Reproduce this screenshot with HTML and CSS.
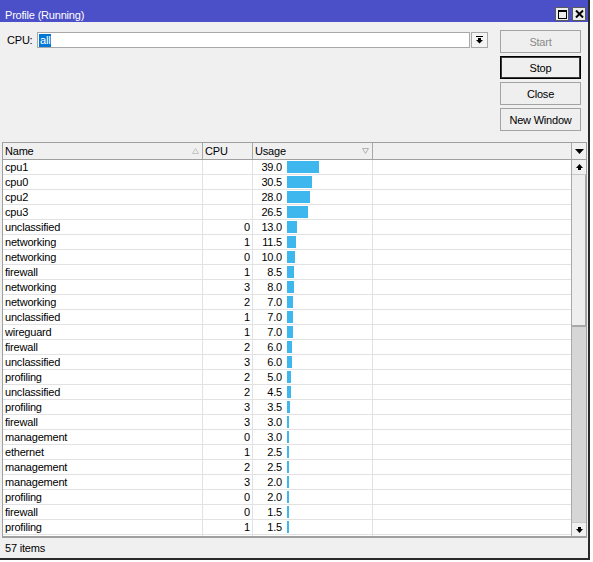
FILE: index.html
```html
<!DOCTYPE html>
<html>
<head>
<meta charset="utf-8">
<link rel="stylesheet" href="styles.css">
</head>
<body>
<div class="window">
  <div class="titlebar">
    <span class="title">Profile (Running)</span>
    <div class="tb-btns">
      <span class="tb-btn"><svg width="9" height="9" viewBox="0 0 9 9"><rect x="0.5" y="0.5" width="8" height="8" fill="none" stroke="#000"/><rect x="0" y="0" width="9" height="2" fill="#000"/></svg></span>
      <span class="tb-btn"><svg width="9" height="8" viewBox="0 0 9 8"><path d="M1 0.5 L8 7.5 M8 0.5 L1 7.5" stroke="#000" stroke-width="2"/></svg></span>
    </div>
  </div>
  <div class="top">
    <div class="cpu-row">
      <span class="cpu-label">CPU:</span>
      <div class="combo"><span class="sel">all</span></div>
      <span class="drop"><svg width="7" height="8" viewBox="0 0 7 8"><rect x="0" y="0" width="7" height="1" fill="#000"/><rect x="2" y="2" width="3" height="2" fill="#000"/><polygon points="0,4 7,4 3.5,7.5" fill="#000"/></svg></span>
    </div>
    <div class="btns">
      <div class="btn disabled">Start</div>
      <div class="btn default">Stop</div>
      <div class="btn">Close</div>
      <div class="btn">New Window</div>
    </div>
  </div>
  <div class="grid">
    <div class="ghead">
      <div class="hc c-name">Name<svg class="sort" width="7" height="6" viewBox="0 0 7 6"><polygon points="3.5,0.5 6.5,5.5 0.5,5.5" fill="none" stroke="#c4c4c4"/></svg></div>
      <div class="hc c-cpu">CPU</div>
      <div class="hc c-usage">Usage<svg class="sort" width="7" height="6" viewBox="0 0 7 6"><polygon points="0.5,0.5 6.5,0.5 3.5,5.5" fill="none" stroke="#b0b0b0"/></svg></div>
      <div class="hc c-empty"></div>
      <div class="hc c-menu"><svg width="9" height="5" viewBox="0 0 9 5"><polygon points="0,0 9,0 4.5,5" fill="#000"/></svg></div>
    </div>
    <div class="gbody">
      <div class="rows">
        <div class="row"><div class="c c-name">cpu1</div><div class="c c-cpu"></div><div class="c c-usage"><span class="num">39.0</span><span class="bar" style="width:32px"></span></div><div class="c c-empty"></div></div>
        <div class="row"><div class="c c-name">cpu0</div><div class="c c-cpu"></div><div class="c c-usage"><span class="num">30.5</span><span class="bar" style="width:25px"></span></div><div class="c c-empty"></div></div>
        <div class="row"><div class="c c-name">cpu2</div><div class="c c-cpu"></div><div class="c c-usage"><span class="num">28.0</span><span class="bar" style="width:23px"></span></div><div class="c c-empty"></div></div>
        <div class="row"><div class="c c-name">cpu3</div><div class="c c-cpu"></div><div class="c c-usage"><span class="num">26.5</span><span class="bar" style="width:21px"></span></div><div class="c c-empty"></div></div>
        <div class="row"><div class="c c-name">unclassified</div><div class="c c-cpu">0</div><div class="c c-usage"><span class="num">13.0</span><span class="bar" style="width:10px"></span></div><div class="c c-empty"></div></div>
        <div class="row"><div class="c c-name">networking</div><div class="c c-cpu">1</div><div class="c c-usage"><span class="num">11.5</span><span class="bar" style="width:9px"></span></div><div class="c c-empty"></div></div>
        <div class="row"><div class="c c-name">networking</div><div class="c c-cpu">0</div><div class="c c-usage"><span class="num">10.0</span><span class="bar" style="width:8px"></span></div><div class="c c-empty"></div></div>
        <div class="row"><div class="c c-name">firewall</div><div class="c c-cpu">1</div><div class="c c-usage"><span class="num">8.5</span><span class="bar" style="width:7px"></span></div><div class="c c-empty"></div></div>
        <div class="row"><div class="c c-name">networking</div><div class="c c-cpu">3</div><div class="c c-usage"><span class="num">8.0</span><span class="bar" style="width:7px"></span></div><div class="c c-empty"></div></div>
        <div class="row"><div class="c c-name">networking</div><div class="c c-cpu">2</div><div class="c c-usage"><span class="num">7.0</span><span class="bar" style="width:6px"></span></div><div class="c c-empty"></div></div>
        <div class="row"><div class="c c-name">unclassified</div><div class="c c-cpu">1</div><div class="c c-usage"><span class="num">7.0</span><span class="bar" style="width:6px"></span></div><div class="c c-empty"></div></div>
        <div class="row"><div class="c c-name">wireguard</div><div class="c c-cpu">1</div><div class="c c-usage"><span class="num">7.0</span><span class="bar" style="width:6px"></span></div><div class="c c-empty"></div></div>
        <div class="row"><div class="c c-name">firewall</div><div class="c c-cpu">2</div><div class="c c-usage"><span class="num">6.0</span><span class="bar" style="width:5px"></span></div><div class="c c-empty"></div></div>
        <div class="row"><div class="c c-name">unclassified</div><div class="c c-cpu">3</div><div class="c c-usage"><span class="num">6.0</span><span class="bar" style="width:5px"></span></div><div class="c c-empty"></div></div>
        <div class="row"><div class="c c-name">profiling</div><div class="c c-cpu">2</div><div class="c c-usage"><span class="num">5.0</span><span class="bar" style="width:4px"></span></div><div class="c c-empty"></div></div>
        <div class="row"><div class="c c-name">unclassified</div><div class="c c-cpu">2</div><div class="c c-usage"><span class="num">4.5</span><span class="bar" style="width:4px"></span></div><div class="c c-empty"></div></div>
        <div class="row"><div class="c c-name">profiling</div><div class="c c-cpu">3</div><div class="c c-usage"><span class="num">3.5</span><span class="bar" style="width:3px"></span></div><div class="c c-empty"></div></div>
        <div class="row"><div class="c c-name">firewall</div><div class="c c-cpu">3</div><div class="c c-usage"><span class="num">3.0</span><span class="bar" style="width:2px"></span></div><div class="c c-empty"></div></div>
        <div class="row"><div class="c c-name">management</div><div class="c c-cpu">0</div><div class="c c-usage"><span class="num">3.0</span><span class="bar" style="width:2px"></span></div><div class="c c-empty"></div></div>
        <div class="row"><div class="c c-name">ethernet</div><div class="c c-cpu">1</div><div class="c c-usage"><span class="num">2.5</span><span class="bar" style="width:2px"></span></div><div class="c c-empty"></div></div>
        <div class="row"><div class="c c-name">management</div><div class="c c-cpu">2</div><div class="c c-usage"><span class="num">2.5</span><span class="bar" style="width:2px"></span></div><div class="c c-empty"></div></div>
        <div class="row"><div class="c c-name">management</div><div class="c c-cpu">3</div><div class="c c-usage"><span class="num">2.0</span><span class="bar" style="width:2px"></span></div><div class="c c-empty"></div></div>
        <div class="row"><div class="c c-name">profiling</div><div class="c c-cpu">0</div><div class="c c-usage"><span class="num">2.0</span><span class="bar" style="width:2px"></span></div><div class="c c-empty"></div></div>
        <div class="row"><div class="c c-name">firewall</div><div class="c c-cpu">0</div><div class="c c-usage"><span class="num">1.5</span><span class="bar" style="width:2px"></span></div><div class="c c-empty"></div></div>
        <div class="row"><div class="c c-name">profiling</div><div class="c c-cpu">1</div><div class="c c-usage"><span class="num">1.5</span><span class="bar" style="width:2px"></span></div><div class="c c-empty"></div></div>
        <div class="row"><div class="c c-name"></div><div class="c c-cpu"></div><div class="c c-usage"><span class="num"></span><span class="bar" style="width:2px"></span></div><div class="c c-empty"></div></div>
      </div>
      <div class="vscroll">
        <div class="sb-btn"><svg width="7" height="7" viewBox="0 0 7 7"><polygon points="3.5,0 7,4 0,4" fill="#000"/><rect x="2" y="4" width="3" height="2" fill="#000"/></svg></div>
        <div class="sb-thumb"></div>
        <div class="sb-track"></div>
        <div class="sb-btn sb-down"><svg width="7" height="7" viewBox="0 0 7 7"><rect x="2" y="1" width="3" height="2" fill="#000"/><polygon points="0,3 7,3 3.5,7" fill="#000"/></svg></div>
      </div>
    </div>
  </div>
  <div class="status">57 items</div>
</div>
</body>
</html>
```

FILE: styles.css
```css
html, body {
  margin: 0;
  padding: 0;
  background: #ffffff;
}

body {
  width: 593px;
  height: 562px;
  overflow: hidden;
  font-family: "Liberation Sans", Arial, sans-serif;
  font-size: 11px;
  letter-spacing: -0.2px;
  color: #000;
}

.window {
  width: 588px;
  height: 558px;
  background: #f0f0f0;
  border-right: 2px solid #2a2a2a;
  border-bottom: 2px solid #2a2a2a;
  display: flex;
  flex-direction: column;
}

.titlebar {
  height: 22px;
  flex: none;
  background: #4b4fc8;
  color: #fff;
  display: flex;
  align-items: center;
  padding-left: 5px;
  box-sizing: border-box;
}

.title {
  font-size: 11px;
  margin-top: 7px;
}

.tb-btns {
  margin-left: auto;
  margin-right: 2px;
  margin-top: 6px;
  display: flex;
  gap: 3px;
}

.tb-btn {
  width: 14px;
  height: 14px;
  box-sizing: border-box;
  background: #ececec;
  border: 1px solid #5a5a5a;
  display: flex;
  align-items: center;
  justify-content: center;
}

.top {
  height: 120px;
  flex: none;
  display: flex;
  align-items: flex-start;
}

.cpu-row {
  margin-top: 10px;
  margin-left: 7px;
  height: 16px;
  display: flex;
  align-items: center;
}

.cpu-label {
  width: 30px;
  line-height: 16px;
}

.combo {
  width: 433px;
  height: 16px;
  box-sizing: border-box;
  border: 1px solid #a8a8a8;
  background: #fff;
  display: flex;
  align-items: center;
  padding-left: 1px;
}

.sel {
  background: #0078d7;
  color: #fff;
  line-height: 13px;
  padding: 0 1px;
}

.drop {
  width: 17px;
  height: 16px;
  box-sizing: border-box;
  margin-left: 1px;
  border: 1px solid #a8a8a8;
  background: #f4f4f4;
  display: flex;
  align-items: center;
  justify-content: center;
}

.btns {
  margin-top: 8px;
  margin-left: 12px;
  display: flex;
  flex-direction: column;
  gap: 3px;
}

.btn {
  width: 81px;
  height: 23px;
  box-sizing: border-box;
  border: 1px solid #a3a3a3;
  background: #efefef;
  display: flex;
  align-items: center;
  justify-content: center;
  font-size: 11px;
}

.btn.disabled {
  color: #8a8a8a;
}

.btn.default {
  border: 1px solid #000;
  box-shadow: inset 0 0 0 1px #3a3a3a;
}

.grid {
  margin-left: 2px;
  width: 585px;
  height: 396px;
  flex: none;
  box-sizing: border-box;
  border: 1px solid #a0a0a0;
  border-bottom: 2px solid #a0a0a0;
  background: #fff;
  display: flex;
  flex-direction: column;
}

.ghead {
  height: 17px;
  flex: none;
  box-sizing: border-box;
  border-bottom: 1px solid #a0a0a0;
  background: #f0f0f0;
  display: flex;
}

.hc {
  position: relative;
  box-sizing: border-box;
  border-right: 1px solid #a8a8a8;
  line-height: 16px;
  padding-left: 2px;
}

.hc.c-menu {
  width: 14px;
  border-right: none;
  padding: 0;
  display: flex;
  align-items: center;
  justify-content: center;
}

.sort {
  position: absolute;
  right: 3px;
  top: 5px;
}

.c-name { width: 200px; }
.c-cpu { width: 50px; }
.c-usage { width: 120px; }
.c-empty { width: 199px; }

.gbody {
  flex: 1;
  display: flex;
  overflow: hidden;
}

.rows {
  width: 568px;
  overflow: hidden;
}

.row {
  height: 15px;
  box-sizing: border-box;
  border-bottom: 1px solid #e2e2e2;
  display: flex;
}

.c {
  box-sizing: border-box;
  border-right: 1px solid #e2e2e2;
  line-height: 14px;
  white-space: nowrap;
}

.c.c-name {
  padding-left: 2px;
}

.c.c-cpu {
  text-align: right;
  padding-right: 2px;
}

.c.c-usage {
  display: flex;
  align-items: flex-start;
}

.c.c-empty {
  width: 198px;
  border-right: none;
}

.num {
  width: 29px;
  text-align: right;
}

.bar {
  display: block;
  height: 12px;
  margin-top: 1px;
  margin-left: 5px;
  background: #3db7ee;
}

.vscroll {
  width: 15px;
  box-sizing: border-box;
  border-left: 1px solid #a8a8a8;
  display: flex;
  flex-direction: column;
  background: #d6d6d6;
}

.sb-btn {
  height: 15px;
  flex: none;
  box-sizing: border-box;
  background: #f0f0f0;
  border-bottom: 1px solid #c8c8c8;
  display: flex;
  align-items: center;
  justify-content: center;
}

.sb-down {
  height: 14px;
  border-bottom: none;
  border-top: 1px solid #c8c8c8;
}

.sb-thumb {
  height: 152px;
  flex: none;
  box-sizing: border-box;
  background: #eeeeee;
  border-bottom: 2px solid #a8a8a8;
  border-right: 1px solid #a8a8a8;
}

.sb-track {
  flex: 1;
  background: #d6d6d6;
}

.status {
  flex: 1;
  padding-left: 5px;
  line-height: 20px;
}
```
